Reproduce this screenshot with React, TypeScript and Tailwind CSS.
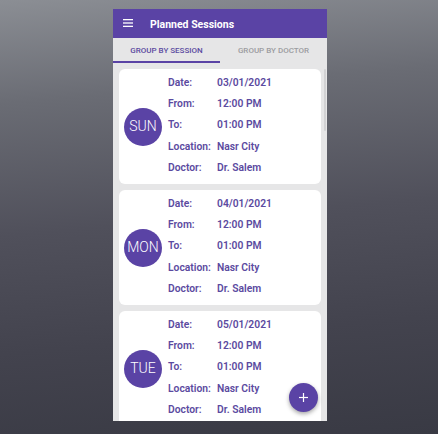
import React from "react";

const sessions = [
  { day: "SUN", date: "03/01/2021" },
  { day: "MON", date: "04/01/2021" },
  { day: "TUE", date: "05/01/2021" },
];

function Card({ day, date }: { day: string; date: string }) {
  const rows: [string, string][] = [
    ["Date:", date],
    ["From:", "12:00 PM"],
    ["To:", "01:00 PM"],
    ["Location:", "Nasr City"],
    ["Doctor:", "Dr. Salem"],
  ];
  return (
    <div className="flex h-[115px] shrink-0 items-center rounded-[6px] bg-white pl-[5px]">
      <div className="flex h-[38px] w-[38px] shrink-0 items-center justify-center rounded-full bg-[#5a43a5] text-[14px] font-light text-white">
        {day}
      </div>
      <div className="ml-[6px] flex flex-col pt-[3px] pb-[6px]">
        {rows.map(([k, v]) => (
          <div key={k} className="flex h-[21.3px] items-center text-[10.3px] font-semibold text-[#5b4aa0]">
            <span className="w-[49px] shrink-0">{k}</span>
            <span>{v}</span>
          </div>
        ))}
      </div>
    </div>
  );
}

export default function App() {
  return (
    <div
      className="flex h-[434px] w-[438px] justify-center bg-[linear-gradient(175deg,#8b8e94_0%,#6a6c74_22%,#50505b_50%,#43434e_75%,#393a44_100%)] pt-[9px] pl-[2px]"
      style={{ fontFamily: "Roboto, 'Liberation Sans', sans-serif" }}
    >
      <div className="relative flex h-[412px] w-[214px] flex-col overflow-hidden bg-[#e6e6e7]">
        <div className="flex h-[29px] shrink-0 items-center bg-[#5a43a5] pl-[10px] pt-[2px]">
          <svg width="10" height="8" viewBox="0 0 10 8" className="mb-[4px]">
            <rect x="0" y="0" width="10" height="1.3" fill="white" />
            <rect x="0" y="3.35" width="10" height="1.3" fill="white" />
            <rect x="0" y="6.7" width="10" height="1.3" fill="white" />
          </svg>
          <span className="ml-[17px] text-[10.5px] font-bold text-white">Planned Sessions</span>
        </div>
        <div className="flex h-[25px] shrink-0">
          <div className="flex w-1/2 items-center justify-center border-b-[2px] border-[#5a43a5] pt-[3px] text-[8px] font-medium text-[#5b4aa0]">
            GROUP BY SESSION
          </div>
          <div className="flex w-1/2 items-center justify-center pt-[1px] text-[8px] font-medium text-[#9c9ca0]">
            GROUP BY DOCTOR
          </div>
        </div>
        <div className="flex flex-col gap-[6px] px-[6px] pt-[6px]">
          {sessions.map((s) => (
            <Card key={s.day} day={s.day} date={s.date} />
          ))}
        </div>
        <div className="absolute right-[1px] top-[60px] h-[62px] w-[2px] rounded bg-[#d2d2d4]" />
        <div className="absolute left-[176px] top-[374px] flex h-[29px] w-[29px] items-center justify-center rounded-full bg-[#5a43a5] shadow-[0_2px_4px_rgba(0,0,0,0.35)]">
          <svg width="9" height="9" viewBox="0 0 9 9">
            <rect x="3.9" y="0" width="1.2" height="9" fill="white" />
            <rect x="0" y="3.9" width="9" height="1.2" fill="white" />
          </svg>
        </div>
      </div>
    </div>
  );
}
